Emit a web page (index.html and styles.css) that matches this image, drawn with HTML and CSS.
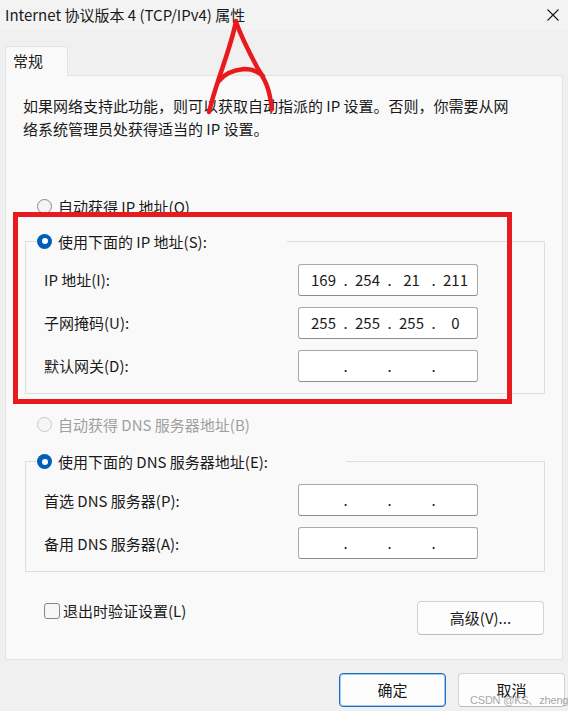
FILE: index.html
```html
<!DOCTYPE html>
<html lang="zh-CN">
<head>
<meta charset="utf-8">
<title>Internet 协议版本 4 (TCP/IPv4) 属性</title>
<link rel="stylesheet" href="styles.css">
</head>
<body>
<div class="window">
  <header class="titlebar">
    <span class="title">Internet 协议版本 4 (TCP/IPv4) 属性</span>
    <svg class="close" width="12" height="12" viewBox="0 0 12 12"><path d="M0.5 0.5 L11.5 11.5 M11.5 0.5 L0.5 11.5" stroke="#1a1a1a" stroke-width="1.1" fill="none"/></svg>
  </header>
  <nav class="tabs"><div class="tab">常规</div></nav>
  <section class="panel">
    <p class="desc">如果网络支持此功能，则可以获取自动指派的 IP 设置。否则，你需要从网<br>络系统管理员处获得适当的 IP 设置。</p>
    <div class="option opt-first"><span class="radio"></span>自动获得 IP 地址(O)</div>
    <fieldset class="group group-ip">
      <legend class="option legend-ip"><span class="radio checked"></span>使用下面的 IP 地址(S):</legend>
      <div class="field-row">
        <span class="label">IP 地址(I):</span>
        <div class="ipbox"><span class="seg">169</span><span class="dot">.</span><span class="seg">254</span><span class="dot">.</span><span class="seg">21</span><span class="dot">.</span><span class="seg">211</span></div>
      </div>
      <div class="field-row">
        <span class="label">子网掩码(U):</span>
        <div class="ipbox"><span class="seg">255</span><span class="dot">.</span><span class="seg">255</span><span class="dot">.</span><span class="seg">255</span><span class="dot">.</span><span class="seg">0</span></div>
      </div>
      <div class="field-row">
        <span class="label">默认网关(D):</span>
        <div class="ipbox"><span class="seg"></span><span class="dot">.</span><span class="seg"></span><span class="dot">.</span><span class="seg"></span><span class="dot">.</span><span class="seg"></span></div>
      </div>
    </fieldset>
    <div class="option opt-disabled"><span class="radio disabled"></span>自动获得 DNS 服务器地址(B)</div>
    <fieldset class="group group-dns">
      <legend class="option legend-dns"><span class="radio checked"></span>使用下面的 DNS 服务器地址(E):</legend>
      <div class="field-row">
        <span class="label">首选 DNS 服务器(P):</span>
        <div class="ipbox"><span class="seg"></span><span class="dot">.</span><span class="seg"></span><span class="dot">.</span><span class="seg"></span><span class="dot">.</span><span class="seg"></span></div>
      </div>
      <div class="field-row">
        <span class="label">备用 DNS 服务器(A):</span>
        <div class="ipbox"><span class="seg"></span><span class="dot">.</span><span class="seg"></span><span class="dot">.</span><span class="seg"></span><span class="dot">.</span><span class="seg"></span></div>
      </div>
    </fieldset>
    <div class="bottom-row">
      <div class="check-row"><span class="checkbox"></span>退出时验证设置(L)</div>
      <button class="btn btn-adv">高级(V)...</button>
    </div>
  </section>
  <footer class="actions">
    <button class="btn btn-primary">确定</button>
    <button class="btn">取消</button>
  </footer>
</div>

<div class="redbox"></div>
<svg class="scribble" width="568" height="130" viewBox="0 0 568 130">
  <path d="M236 21 C233 38 225 60 219 78 C215 90 212 100 209 112" stroke="#e81a1d" stroke-width="4.5" fill="none" stroke-linecap="round"/>
  <path d="M236 22 C241 36 249 52 257 67 C261 74 265 80 267 86 C270 94 271 102 272 109" stroke="#e81a1d" stroke-width="4.5" fill="none" stroke-linecap="round"/>
  <path d="M219 81 C225 73 234 70 244 69 C252 69 258 71 263 76" stroke="#e81a1d" stroke-width="4.5" fill="none" stroke-linecap="round"/>
</svg>
<div class="watermark">CSDN @KS、zheng</div>
</body>
</html>
```

FILE: styles.css
```css
* { box-sizing: border-box; }

html, body {
  margin: 0;
  padding: 0;
}

body {
  width: 568px;
  height: 711px;
  overflow: hidden;
  background: #f0f0f0;
  font-family: "Noto Sans CJK SC", "Noto Sans", sans-serif;
  font-size: 15px;
  color: #1a1a1a;
  position: relative;
}

.window {
  width: 568px;
  height: 711px;
  display: flex;
  flex-direction: column;
}

.titlebar {
  height: 30px;
  background: #f3f3f3;
  display: flex;
  align-items: center;
  justify-content: space-between;
  padding: 0 9px 0 5px;
}

.title {
  font-size: 15px;
  line-height: 20px;
  color: #1a1a1a;
}

.close { display: block; }

.tabs {
  padding: 16px 0 0 5px;
  display: flex;
}

.tab {
  width: 63px;
  height: 30px;
  margin-bottom: -1px;
  position: relative;
  z-index: 1;
  background: #f9f9f9;
  border: 1px solid #e3e3e3;
  border-bottom: none;
  border-radius: 3px 3px 0 0;
  padding-left: 7px;
  line-height: 28px;
  font-size: 15px;
}

.panel {
  margin-left: 5px;
  width: 558px;
  height: 585px;
  background: #f9f9f9;
  border: 1px solid #e3e3e3;
  padding: 18px 0 0 0;
}

.desc {
  margin: 0 0 0 17px;
  line-height: 23px;
  white-space: nowrap;
}

.option {
  display: flex;
  align-items: center;
  line-height: 23px;
  height: 23px;
  white-space: nowrap;
}

.opt-first {
  margin: 54.5px 0 0 31px;
}

.opt-disabled {
  margin: 19.5px 0 0 31px;
  color: #a0a0a0;
}

.radio {
  width: 15px;
  height: 15px;
  border-radius: 50%;
  border: 1px solid #8a8a8a;
  background: #f4f4f4;
  margin-right: 6px;
  flex: none;
  position: relative;
}

.radio.checked {
  border: none;
  background: #005fb8;
}

.radio.checked::after {
  content: "";
  position: absolute;
  left: 4.5px;
  top: 4.5px;
  width: 6px;
  height: 6px;
  border-radius: 50%;
  background: #ffffff;
}

.radio.disabled {
  border-color: #c8c8c8;
  background: #f6f6f6;
}

.group {
  margin: 12px 0 0 19px;
  width: 520px;
  padding: 11px 0 11px 18px;
  border: 1px solid #dedede;
  min-inline-size: 0;
}

.group-dns {
  margin-top: 14px;
  padding-bottom: 12px;
}

.group legend {
  padding: 0;
  margin-left: -7px;
}

.legend-ip { width: 250px; }
.legend-dns { width: 309px; }

.field-row {
  display: grid;
  grid-template-columns: 254px 180px;
  align-items: center;
  height: 32px;
}

.field-row + .field-row {
  margin-top: 11px;
}

.label {
  line-height: 23px;
  white-space: nowrap;
}

.ipbox {
  height: 32px;
  width: 180px;
  background: #ffffff;
  border: 1px solid #a9a9a9;
  border-bottom-color: #8c8c8c;
  border-radius: 3px;
  display: flex;
  align-items: center;
  padding-left: 6.5px;
  font-size: 15px;
  line-height: 20px;
}

.seg {
  width: 36px;
  text-align: center;
  flex: none;
}

.dot {
  width: 8px;
  text-align: center;
  flex: none;
}

.bottom-row {
  margin-top: 27px;
  padding: 0 18px 0 38px;
  display: flex;
  justify-content: space-between;
  align-items: flex-start;
}

.check-row {
  display: flex;
  align-items: center;
  line-height: 23px;
  height: 23px;
}

.checkbox {
  width: 16px;
  height: 16px;
  border: 1px solid #878787;
  border-radius: 3px;
  background: #f6f6f6;
  margin-right: 3px;
}

.btn {
  font-family: "Noto Sans CJK SC", "Noto Sans", sans-serif;
  font-size: 15px;
  color: #1a1a1a;
  height: 34px;
  width: 107px;
  background: #fdfdfd;
  border: 1px solid #d3d3d3;
  border-bottom-color: #bcbcbc;
  border-radius: 4px;
  padding: 0;
  line-height: 20px;
}

.btn-adv {
  width: 127px;
  margin-top: 1.5px;
}

.btn-primary {
  border: 1px solid #1d6fc4;
  box-shadow: inset 0 0 0 1px rgba(0, 103, 192, 0.35);
}

.actions {
  margin-top: 13px;
  padding-right: 3px;
  display: flex;
  justify-content: flex-end;
  gap: 12px;
}

.redbox {
  position: absolute;
  left: 13px;
  top: 212px;
  width: 499px;
  height: 192px;
  border: 5px solid #e81a1d;
  pointer-events: none;
}

.scribble {
  position: absolute;
  left: 0;
  top: 0;
  pointer-events: none;
}

.watermark {
  position: absolute;
  left: 470px;
  top: 693px;
  font-family: "Liberation Sans", Arial, sans-serif;
  font-size: 11px;
  line-height: 14px;
  letter-spacing: -0.2px;
  color: rgba(150, 150, 150, 0.85);
  white-space: nowrap;
}
```
